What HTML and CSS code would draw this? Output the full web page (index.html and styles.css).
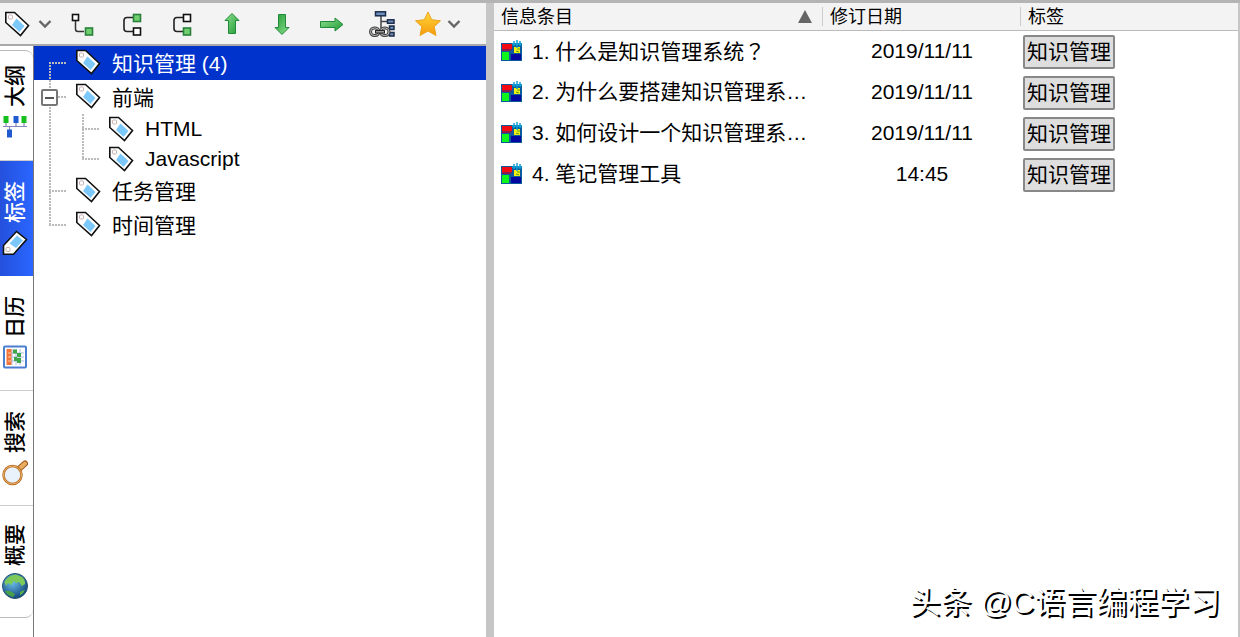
FILE: index.html
```html
<!DOCTYPE html>
<html lang="zh-CN">
<head>
    <meta charset="UTF-8">
    <meta name="viewport" content="width=device-width, initial-scale=1.0">
    <title>知识管理</title>
    <link rel="stylesheet" href="styles.css">
</head>
<body>

<svg class="icon-defs" aria-hidden="true">
    <defs>
        <linearGradient id="green" x1="0" x2="1" y1="0" y2="1">
            <stop offset="0" stop-color="#8fe08f"/>
            <stop offset="1" stop-color="#1f9a35"/>
        </linearGradient>
        <linearGradient id="gold" x1="0" x2="0" y1="0" y2="1">
            <stop offset="0" stop-color="#ffd83a"/>
            <stop offset="1" stop-color="#f79a0c"/>
        </linearGradient>
        <radialGradient id="ocean" cx="0.4" cy="0.35" r="0.7">
            <stop offset="0" stop-color="#6cc0ea"/>
            <stop offset="1" stop-color="#0d3f78"/>
        </radialGradient>
    </defs>
    <symbol id="tag" viewBox="0 0 26 26">
        <path d="M1.800 1.500H10.500L24.500 14.500L16.500 24.500L1.800 11.500Z" fill="#fff" stroke="#111" stroke-width="1.600"/>
        <path d="M12.500 7.500L20.500 15L15.500 21L8 14Z" fill="#7cc8fb"/>
        <rect x="4.500" y="4" width="4" height="4" rx="1" fill="#fff" stroke="#c9b3b3"/>
    </symbol>
    <symbol id="chevron" viewBox="0 0 14 10">
        <path d="M1.500 2L7 7.500L12.500 2" fill="none" stroke="#666" stroke-width="2.400"/>
    </symbol>
    <symbol id="arrow" viewBox="0 0 26 26">
        <path d="M13 2.500L20 9.500H16.500V22.500H9.500V9.500H6Z" fill="url(#green)" stroke="#1f8a38" stroke-width="1"/>
    </symbol>
    <symbol id="entry" viewBox="0 0 24 24">
        <rect x="1" y="4" width="21" height="18" fill="#0a5a9c"/>
        <rect x="2" y="5" width="10" height="5" fill="#f40b12"/>
        <path d="M2 10H12L10 12H2Z" fill="#8c1a50"/>
        <rect x="2" y="13" width="7" height="8" fill="#0cf51c"/>
        <rect x="11" y="15" width="10" height="6" fill="#0508a0"/>
        <path d="M14 8H20V14H14Z" fill="#f2f30c"/>
        <path d="M17 1V9M14 2V7M20 2V7M12 5H22" stroke="#10a0d8" stroke-width="1.500"/>
        <path d="M17 10H20M16 12L19 13" stroke="#5c9a30"/>
    </symbol>
</svg>

<div class="app">
    <section class="left-pane">
        <div class="toolbar" role="toolbar" aria-label="标签工具">
            <button type="button" class="tool-tag" aria-label="标签">
                <svg class="icon"><use href="#tag"/></svg>
                <svg class="chevron"><use href="#chevron"/></svg>
            </button>
            <button type="button" class="tool" aria-label="添加子标签">
                <svg class="icon" viewBox="0 0 26 26">
                    <path d="M6.500 9V18Q6.500 20.500 9 20.500H15" fill="none" stroke="#333" stroke-width="1.500"/>
                    <rect x="3.500" y="3.500" width="6" height="6" fill="#fff" stroke="#111" stroke-width="1.600"/>
                    <rect x="16.500" y="17" width="7" height="7" fill="#6fcf6f" stroke="#28803a" stroke-width="1.600"/>
                </svg>
            </button>
            <button type="button" class="tool" aria-label="在前面添加">
                <svg class="icon" viewBox="0 0 26 26">
                    <path d="M14 6.500H8Q5 6.500 5 9.500V17.500Q5 20.500 8 20.500H14" fill="none" stroke="#222" stroke-width="1.600"/>
                    <rect x="14.500" y="3.500" width="7" height="7" fill="#6fcf6f" stroke="#28803a" stroke-width="1.600"/>
                    <rect x="14.500" y="17" width="7" height="7" fill="#fff" stroke="#111" stroke-width="1.600"/>
                </svg>
            </button>
            <button type="button" class="tool" aria-label="在后面添加">
                <svg class="icon" viewBox="0 0 26 26">
                    <path d="M14 6.500H8Q5 6.500 5 9.500V17.500Q5 20.500 8 20.500H14" fill="none" stroke="#222" stroke-width="1.600"/>
                    <rect x="14.500" y="3.500" width="7" height="7" fill="#fff" stroke="#111" stroke-width="1.600"/>
                    <rect x="14.500" y="17" width="7" height="7" fill="#6fcf6f" stroke="#28803a" stroke-width="1.600"/>
                </svg>
            </button>
            <button type="button" class="tool" aria-label="上移">
                <svg class="icon"><use href="#arrow"/></svg>
            </button>
            <button type="button" class="tool" aria-label="下移">
                <svg class="icon arrow-down"><use href="#arrow"/></svg>
            </button>
            <button type="button" class="tool" aria-label="移动到">
                <svg class="icon" viewBox="0 0 26 26">
                    <path d="M1.500 10.500H16V7L24 13.500L16 20V16.500H1.500Z" fill="url(#green)" stroke="#1f8a38"/>
                </svg>
            </button>
            <button type="button" class="tool" aria-label="链接">
                <svg class="icon" viewBox="0 0 26 26">
                    <path d="M12 5V17M12 10.500H19" stroke="#444" stroke-width="1.500" fill="none"/>
                    <rect x="6.500" y="0.800" width="10" height="4" fill="#6d8fc0" stroke="#1c2b48" stroke-width="1.500"/>
                    <rect x="18.500" y="8.800" width="6.500" height="3.500" fill="#6d8fc0" stroke="#1c2b48" stroke-width="1.500"/>
                    <rect x="20.500" y="15" width="4.500" height="3.500" fill="#6d8fc0" stroke="#1c2b48" stroke-width="1.500"/>
                    <rect x="20.500" y="21.500" width="4.500" height="3.500" fill="#6d8fc0" stroke="#1c2b48" stroke-width="1.500"/>
                    <rect x="1.500" y="17" width="8.500" height="7.500" rx="3.700" fill="none" stroke="#444" stroke-width="3"/>
                    <rect x="1.500" y="17" width="8.500" height="7.500" rx="3.700" fill="none" stroke="#bbb"/>
                    <rect x="11.500" y="17" width="8.500" height="7.500" rx="3.700" fill="none" stroke="#444" stroke-width="3"/>
                    <rect x="11.500" y="17" width="8.500" height="7.500" rx="3.700" fill="none" stroke="#bbb"/>
                    <path d="M6 20.800H16" stroke="#222" stroke-width="3.500"/>
                    <path d="M7 20.800H15" stroke="#bbb" stroke-width="1.200"/>
                </svg>
            </button>
            <button type="button" class="tool-star" aria-label="收藏">
                <svg class="icon" viewBox="0 0 26 26">
                    <path d="M13 1L16.700 8.700L25.500 9.800L19.200 15.600L21 24.500L13 20L5 24.500L6.800 15.600L0.500 9.800L9.300 8.700Z" fill="url(#gold)" stroke="#eba31e" stroke-linejoin="round"/>
                </svg>
                <svg class="chevron"><use href="#chevron"/></svg>
            </button>
        </div>

        <div class="left-body">
            <nav class="tabs">
                <button type="button" class="tab">
                    <span>大纲</span>
                    <svg class="icon" viewBox="0 0 26 26">
                        <path d="M1 12.500H25M4 7V12M14 7V12M22 7V12M7.500 12V16" stroke="#8a86b8" stroke-width="1.200"/>
                        <rect x="1.500" y="2" width="5" height="7" fill="#16c01c"/>
                        <rect x="11.500" y="2" width="5" height="7" fill="#1f5ad0"/>
                        <rect x="19.500" y="2" width="5" height="7" fill="#16c01c"/>
                        <rect x="5" y="15.500" width="5" height="8" fill="#1f5ad0"/>
                    </svg>
                </button>
                <button type="button" class="tab active">
                    <span>标签</span>
                    <svg class="icon icon-turned"><use href="#tag"/></svg>
                </button>
                <button type="button" class="tab">
                    <span>日历</span>
                    <svg class="icon" viewBox="0 0 26 26">
                        <rect x="2" y="1.500" width="22" height="21" rx="1" fill="#fff" stroke="#4a7fd0" stroke-width="2"/>
                        <path d="M10 4V20M14 4V20M18 4V20M5 8H22M5 12H22M5 16H22" stroke="#a8bce0"/>
                        <rect x="4.500" y="4" width="5" height="16" fill="#f2743a"/>
                        <path d="M6 8H9M6 12H9M6 16H9" stroke="#fbd0ae"/>
                        <path d="M11 4.500H15V8.500H11ZM15 8H19V12H15ZM12 12H15V16H12ZM15 13H19V18H15Z" fill="#3fa648"/>
                    </svg>
                </button>
                <button type="button" class="tab">
                    <span>搜索</span>
                    <svg class="icon" viewBox="0 0 26 26">
                        <path d="M17.500 8.500L23 3.500" stroke="#9c5a1c" stroke-width="6" stroke-linecap="round"/>
                        <path d="M17.500 8.500L23 3.500" stroke="#eaae60" stroke-width="4" stroke-linecap="round"/>
                        <circle cx="10.500" cy="15" r="9" fill="#e9f1fb" stroke="#b56a20" stroke-width="2.500"/>
                        <circle cx="10.500" cy="15" r="9" fill="none" stroke="#eeb46a"/>
                    </svg>
                </button>
                <button type="button" class="tab">
                    <span>概要</span>
                    <svg class="icon" viewBox="0 0 26 26">
                        <circle cx="13" cy="13" r="12.500" fill="url(#ocean)" stroke="#24536e"/>
                        <path d="M2.500 9Q6 2 14 1.500L20 4Q23.500 7 23 11L20 13L17 9L14 10L12 8L9 12L6 10L4 13Z" fill="#7cc95a"/>
                        <path d="M3 18L8 18L13 21L11 24Q5 22.500 3 18Z" fill="#48a048"/>
                        <path d="M18 19L23 16.500Q22 20 18 22.500Z" fill="#58b04c"/>
                    </svg>
                </button>
            </nav>

            <ul class="tree">
                <li>
                    <a href="#" class="row selected"><svg class="icon"><use href="#tag"/></svg>知识管理 (4)</a>
                </li>
                <li>
                    <button type="button" class="toggle" aria-label="折叠"></button>
                    <a href="#" class="row"><svg class="icon"><use href="#tag"/></svg>前端</a>
                    <ul class="subtree">
                        <li><a href="#" class="row"><svg class="icon"><use href="#tag"/></svg>HTML</a></li>
                        <li><a href="#" class="row"><svg class="icon"><use href="#tag"/></svg>Javascript</a></li>
                    </ul>
                </li>
                <li>
                    <a href="#" class="row"><svg class="icon"><use href="#tag"/></svg>任务管理</a>
                </li>
                <li>
                    <a href="#" class="row"><svg class="icon"><use href="#tag"/></svg>时间管理</a>
                </li>
            </ul>
        </div>
    </section>

    <main class="right-pane">
        <table class="entries">
            <thead>
                <tr>
                    <th class="col-title"><div>信息条目<svg class="sort" viewBox="0 0 14 14"><path d="M7 0L14 13H0Z" fill="#666"/></svg></div></th>
                    <th class="col-date"><div>修订日期</div></th>
                    <th><div>标签</div></th>
                </tr>
            </thead>
            <tbody>
                <tr>
                    <td><div class="title"><svg><use href="#entry"/></svg><span>1. 什么是知识管理系统<span class="mark" lang="zh-TW">？</span></span></div></td>
                    <td class="date">2019/11/11</td>
                    <td><span class="label">知识管理</span></td>
                </tr>
                <tr>
                    <td><div class="title"><svg><use href="#entry"/></svg><span>2. 为什么要搭建知识管理系…</span></div></td>
                    <td class="date">2019/11/11</td>
                    <td><span class="label">知识管理</span></td>
                </tr>
                <tr>
                    <td><div class="title"><svg><use href="#entry"/></svg><span>3. 如何设计一个知识管理系…</span></div></td>
                    <td class="date">2019/11/11</td>
                    <td><span class="label">知识管理</span></td>
                </tr>
                <tr>
                    <td><div class="title"><svg><use href="#entry"/></svg><span>4. 笔记管理工具</span></div></td>
                    <td class="date">14:45</td>
                    <td><span class="label">知识管理</span></td>
                </tr>
            </tbody>
        </table>
        <div class="watermark">头条 @C语言编程学习</div>
    </main>
</div>

</body>
</html>
```
FILE: styles.css
```css
* {
    box-sizing: border-box;
}

body {
    margin: 0;
    font-family: "Liberation Sans", "Noto Sans CJK SC", sans-serif;
    font-size: 21px;
    color: #000;
    background-color: white;
}

button {
    font: inherit;
    color: inherit;
    border: none;
    padding: 0;
    background: none;
    cursor: pointer;
}

ul {
    list-style: none;
    margin: 0;
    padding: 0;
}

svg {
    display: block;
    flex: none;
}

.icon-defs {
    position: absolute;
    width: 0;
    height: 0;
}

.icon {
    width: 26px;
    height: 26px;
}

.icon-turned {
    transform: rotate(-90deg);
}

.arrow-down {
    transform: rotate(180deg);
}

.chevron {
    width: 14px;
    height: 10px;
}

.app {
    display: flex;
    min-height: 100vh;
    border-top: 3px solid #b4b4b4;
}

/* left pane */
.left-pane {
    display: flex;
    flex-direction: column;
    flex: none;
    width: 494px;
    border-right: 8px solid #c6c6c6;
}

.toolbar {
    display: flex;
    align-items: center;
    height: 43px;
    background-color: #f3f3f3;
    border-bottom: 2px solid #a9a9a9;
}

.tool-tag {
    display: flex;
    align-items: center;
    gap: 8px;
    width: 57px;
    padding-left: 4px;
}

.tool {
    display: flex;
    justify-content: center;
    width: 50px;
}

.tool-star {
    display: flex;
    align-items: center;
    gap: 6px;
    padding-left: 8px;
}

.left-body {
    display: flex;
    flex: 1;
}

/* vertical tabs */
.tabs {
    width: 34px;
    padding-top: 4px;
    border-right: 1px solid #777;
}

.tab {
    display: flex;
    flex-direction: column;
    align-items: center;
    justify-content: center;
    gap: 7px;
    width: 100%;
    height: 115px;
    padding-right: 4px;
    border-bottom: 1px solid #ccc;
}

.tab:first-child {
    height: 111px;
    padding-bottom: 6px;
    border-top: 1px solid #bbb;
    border-top-right-radius: 8px;
}

.tab:last-child {
    height: 112px;
    border-bottom-color: #bbb;
    border-bottom-right-radius: 8px;
}

.tab span {
    writing-mode: vertical-rl;
    text-orientation: sideways;
    transform: rotate(180deg);
    font-weight: 500;
    line-height: 28px;
}

.tab.active {
    color: white;
    background: linear-gradient(to right, #2450dc, #2a66ff);
    border-bottom: none;
}

/* tag tree */
.tree {
    flex: 1;
}

.tree li {
    position: relative;
}

.tree li::before,
.tree li::after {
    content: "";
    position: absolute;
    left: 15px;
}

.tree li::before {
    top: 0;
    bottom: 0;
    width: 2px;
    background: repeating-linear-gradient(to bottom, #bbb 0 2px, transparent 2px 3px);
}

.tree li::after {
    top: 16px;
    width: 17px;
    height: 2px;
    background: repeating-linear-gradient(to right, #bbb 0 2px, transparent 2px 3px);
}

.tree > li:first-child::before {
    top: 16px;
}

.tree > li:last-child::before {
    bottom: auto;
    height: 18px;
}

.row {
    display: flex;
    align-items: center;
    gap: 11px;
    height: 34px;
    padding-left: 41px;
    padding-bottom: 2px;
    color: inherit;
    text-decoration: none;
}

.row.selected {
    color: white;
    background-color: #0033cc;
}

.subtree {
    margin-left: 33px;
}

.subtree .row {
    height: 30px;
    padding-bottom: 0;
}

.tree .subtree li::after {
    top: 14px;
}

.subtree li:last-child::before {
    bottom: 14px;
}

.toggle {
    position: absolute;
    z-index: 1;
    top: 9px;
    left: 7px;
    width: 17px;
    height: 17px;
    border: 2px solid #777;
    border-radius: 2px;
    background: linear-gradient(#555, #555) center / 9px 2px no-repeat white;
}

/* entry list */
.right-pane {
    position: relative;
    flex: 1;
    border-right: 2px solid #c6c6c6;
}

.entries {
    width: 100%;
    table-layout: fixed;
    border-collapse: collapse;
}

.entries th {
    padding: 4px 0;
    font-size: 18px;
    font-weight: normal;
    line-height: 18px;
    text-align: left;
    background-color: #f3f3f3;
    border-bottom: 1px solid #bbb;
}

.entries th div {
    display: flex;
    align-items: center;
    justify-content: space-between;
    height: 19px;
    padding: 0 10px 0 7px;
    border-right: 1px solid #ccc;
}

.entries th:last-child div {
    border-right: none;
}

.col-title {
    width: 329px;
}

.col-date {
    width: 198px;
}

.sort {
    width: 14px;
    height: 14px;
}

.entries td {
    height: 41px;
    padding: 0;
}

.entries .title {
    display: flex;
    align-items: center;
    gap: 8px;
    padding-left: 6px;
    line-height: 28px;
    white-space: nowrap;
}

.title svg {
    width: 24px;
    height: 24px;
}

.mark {
    font-family: "Noto Sans CJK TC", sans-serif;
}

.entries .date {
    text-align: center;
}

.entries td:last-child {
    padding-top: 2px;
}

.label {
    display: block;
    width: fit-content;
    margin-left: 2px;
    padding: 0 2px;
    line-height: 30px;
    background-color: #dedede;
    border: 2px solid #888;
    border-radius: 2px;
}

.watermark {
    position: absolute;
    right: 18px;
    bottom: 15px;
    font-size: 31px;
    color: white;
    text-shadow: 2px 2px 0 #000;
}
```
